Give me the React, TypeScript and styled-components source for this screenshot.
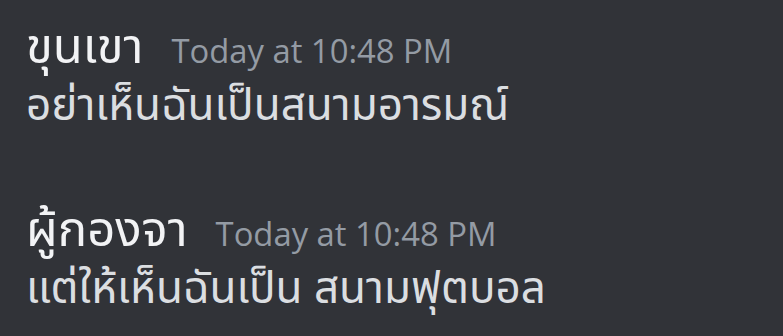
import React from "react";
import styled, { createGlobalStyle } from "styled-components";

const Global = createGlobalStyle`
  html, body { margin: 0; padding: 0; background: #313338; }
  body { width: 783px; height: 336px; overflow: hidden; }
`;

const Page = styled.div`
  width: 783px;
  height: 336px;
  background: #313338;
  box-sizing: border-box;
  padding: 15px 26px 0;
  display: flex;
  flex-direction: column;
  gap: 65px;
  font-family: "Noto Sans", "Noto Sans Thai", sans-serif;
`;

const Message = styled.div`
  display: flex;
  flex-direction: column;
`;

const Header = styled.div`
  display: flex;
  align-items: baseline;
  gap: 28px;
  height: 59px;
`;

const Name = styled.span`
  color: #f2f3f5;
  font-size: 49px;
  line-height: 59px;
  font-weight: 400;
`;

const Time = styled.span`
  color: #949ba4;
  font-size: 32.8px;
  font-family: "Open Sans", "Noto Sans", sans-serif;
`;

const Body = styled.div`
  color: #dbdee1;
  font-size: 44px;
  line-height: 59px;
`;

const msgs = [
  { name: "ขุนเขา", time: "Today at 10:48 PM", text: "อย่าเห็นฉันเป็นสนามอารมณ์" },
  { name: "ผู้กองจา", time: "Today at 10:48 PM", text: "แต่ให้เห็นฉันเป็น สนามฟุตบอล" },
];

export default function App() {
  return (
    <>
      <Global />
      <Page>
        {msgs.map((m, i) => (
          <Message key={i}>
            <Header>
              <Name>{m.name}</Name>
              <Time>{m.time}</Time>
            </Header>
            <Body>{m.text}</Body>
          </Message>
        ))}
      </Page>
    </>
  );
}
